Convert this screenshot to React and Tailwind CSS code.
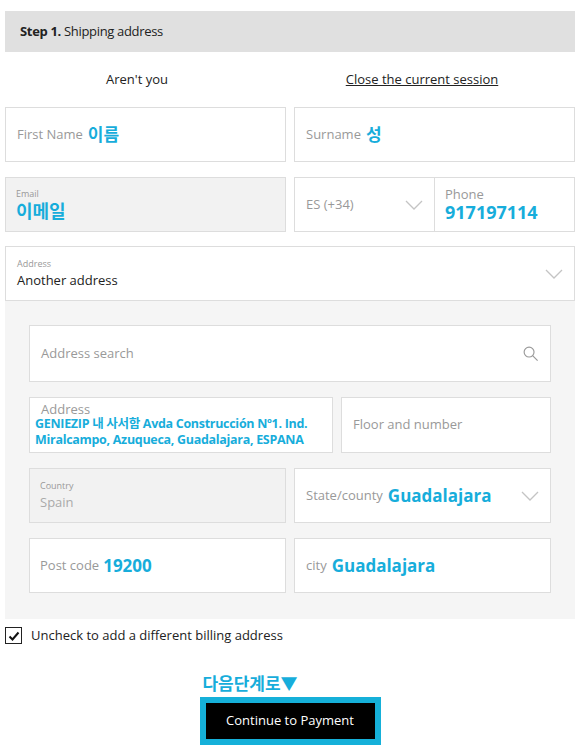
import React from 'react';

const F = { fontFamily: '"Open Sans", "Noto Sans", "Noto Sans CJK KR", sans-serif' };
const blue = 'text-[#17addb] font-bold';

function Chevron() {
  return (
    <svg width="20" height="12" viewBox="0 0 20 12" fill="none" stroke="#c4c4c4" strokeWidth="1.3">
      <path d="M2 2l8 8 8-8" />
    </svg>
  );
}

export default function App() {
  return (
    <div className="w-[580px] h-[750px] bg-white text-[#222] text-[14px]" style={F}>
      <div className="pt-[11px] px-[5px]">
        <div className="h-[41px] bg-[#e0e0e0] flex items-center px-[15px] text-[13px] tracking-tight">
          <span className="font-bold">Step 1.</span>&nbsp;Shipping address
        </div>
        <div className="h-[55px] flex items-center text-[13px]">
          <div className="w-[264px] text-center">Aren't you</div>
          <div className="flex-1 text-center underline">Close the current session</div>
        </div>
        <div className="grid grid-cols-2 gap-[8px]">
          <div className="h-[55px] border border-[#ddd] flex items-center px-[11px] gap-[5px]">
            <span className="text-[#999] text-[13px]">First Name</span>
            <span className={`${blue} text-[17px]`}>이름</span>
          </div>
          <div className="h-[55px] border border-[#ddd] flex items-center px-[11px] gap-[5px]">
            <span className="text-[#999] text-[13px]">Surname</span>
            <span className={`${blue} text-[17px]`}>성</span>
          </div>
        </div>
        <div className="grid grid-cols-2 gap-[8px] mt-[15px]">
          <div className="h-[55px] border border-[#ddd] bg-[#f2f2f2] flex flex-col justify-center px-[10px]">
            <span className="text-[#999] text-[9px] leading-[12px]">Email</span>
            <span className={`${blue} text-[18px] leading-[22px]`}>이메일</span>
          </div>
          <div className="h-[55px] border border-[#ddd] flex">
            <div className="w-[140px] flex items-center justify-between pl-[11px] pr-[10px] border-r border-[#ddd]">
              <span className="text-[#999] text-[13px]">ES (+34)</span>
              <Chevron />
            </div>
            <div className="flex flex-col justify-center px-[10px]">
              <span className="text-[#999] text-[13px] leading-[15px]">Phone</span>
              <span className={`${blue} text-[18px] leading-[21px]`}>917197114</span>
            </div>
          </div>
        </div>
        <div className="mt-[14px] h-[55px] border border-[#ddd] flex items-center justify-between pl-[11px] pr-[10px]">
          <div className="flex flex-col">
            <span className="text-[#999] text-[9px] leading-[12px]">Address</span>
            <span className="text-[13px] leading-[20px]">Another address</span>
          </div>
          <Chevron />
        </div>
        <div className="bg-[#f5f5f5] h-[318px] px-[24px] pt-[24px] flex flex-col gap-[15px]">
          <div className="h-[57px] bg-white border border-[#ddd] flex items-center justify-between px-[11px]">
            <span className="text-[#999] text-[13px]">Address search</span>
            <svg width="17" height="17" viewBox="0 0 24 24" fill="none" stroke="#999" strokeWidth="1.6">
              <circle cx="10" cy="10" r="7" /><path d="M15 15l7 7" />
            </svg>
          </div>
          <div className="flex gap-[8px] h-[56px]">
            <div className="w-[304px] bg-white border border-[#ddd] flex flex-col justify-center px-[5px]">
              <span className="text-[#999] text-[13px] leading-[14px] pl-[6px]">Address</span>
              <span className="text-[#17addb] font-bold text-[12.5px] leading-[16px] tracking-[-0.3px]">GENIEZIP 내 사서함 Avda Construcción Nº1. Ind. Miralcampo, Azuqueca, Guadalajara, ESPANA</span>
            </div>
            <div className="flex-1 bg-white border border-[#ddd] flex items-center px-[11px]">
              <span className="text-[#999] text-[13px]">Floor and number</span>
            </div>
          </div>
          <div className="grid grid-cols-2 gap-[8px] h-[55px]">
            <div className="bg-[#f2f2f2] border border-[#ddd] flex flex-col justify-center px-[10px]">
              <span className="text-[#999] text-[9px] leading-[12px]">Country</span>
              <span className="text-[#aaa] text-[13px] leading-[20px]">Spain</span>
            </div>
            <div className="bg-white border border-[#ddd] flex items-center justify-between pl-[11px] pr-[10px]">
              <div className="flex items-center gap-[5px]">
                <span className="text-[#999] text-[13px]">State/county</span>
                <span className={`${blue} text-[17px]`}>Guadalajara</span>
              </div>
              <Chevron />
            </div>
          </div>
          <div className="grid grid-cols-2 gap-[8px] h-[55px]">
            <div className="bg-white border border-[#ddd] flex items-center px-[10px] gap-[4px]">
              <span className="text-[#999] text-[13px]">Post code</span>
              <span className={`${blue} text-[17px]`}>19200</span>
            </div>
            <div className="bg-white border border-[#ddd] flex items-center px-[11px] gap-[5px]">
              <span className="text-[#999] text-[13px]">city</span>
              <span className={`${blue} text-[17px]`}>Guadalajara</span>
            </div>
          </div>
        </div>
        <div className="flex items-center gap-[9px] mt-[7px]">
          <div className="w-[17px] h-[17px] border border-[#222] flex items-center justify-center">
            <svg width="12" height="12" viewBox="0 0 12 12" fill="none" stroke="#111" strokeWidth="2">
              <path d="M1.5 6.5l3 3 6-7" />
            </svg>
          </div>
          <span className="text-[13px]">Uncheck to add a different billing address</span>
        </div>
        <div className="flex flex-col items-center mt-[27px]">
          <span className="text-[#17addb] font-bold text-[17px] leading-[22px] mr-[80px]">다음단계로▼</span>
          <div className="border-[6px] border-[#15b0d9] mt-[2px]">
            <div className="w-[169px] h-[36px] bg-black text-white text-[13px] flex items-center justify-center">Continue to Payment</div>
          </div>
        </div>
      </div>
    </div>
  );
}
